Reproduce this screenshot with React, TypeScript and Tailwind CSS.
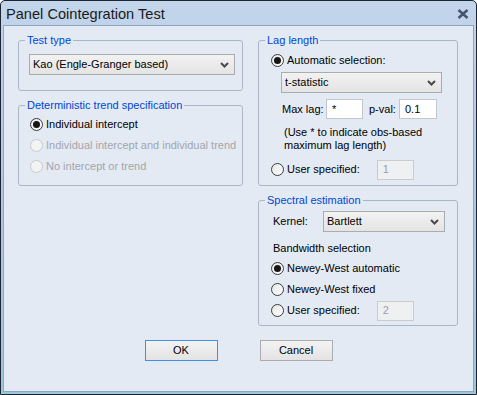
import React from "react";

function Radio({ checked = false, disabled = false }: { checked?: boolean; disabled?: boolean }) {
  return (
    <span
      className={`flex items-center justify-center w-[13px] h-[13px] rounded-full border shrink-0 ${
        disabled
          ? "border-[#c6cad0] bg-[#f3f3f3]"
          : "border-[#3c3c3c] bg-gradient-to-br from-[#e6e6e6] to-white"
      }`}
    >
      {checked && <span className="w-[7px] h-[7px] rounded-full bg-[#151515]" />}
    </span>
  );
}

function Select({ text, className = "" }: { text: string; className?: string }) {
  return (
    <div
      className={`flex items-center justify-between h-[21px] border border-[#acacac] bg-gradient-to-b from-[#f2f2f2] to-[#e4e4e4] pl-[3px] pr-[5px] text-black ${className}`}
    >
      <span>{text}</span>
      <svg width="9" height="6" viewBox="0 0 9 6">
        <path d="M1 1 L4.5 4.5 L8 1" stroke="#4a4a4a" strokeWidth="2" fill="none" />
      </svg>
    </div>
  );
}

function Input({ value, disabled = false, className = "" }: { value: string; disabled?: boolean; className?: string }) {
  return (
    <div
      className={`flex items-center h-[20px] border pl-[5px] ${
        disabled ? "border-[#c9cccf] bg-[#eff0f1] text-[#9a9fa5]" : "border-[#c3c7cc] bg-white text-black"
      } ${className}`}
    >
      {value}
    </div>
  );
}

function Group({ title, className = "", children }: { title: string; className?: string; children: React.ReactNode }) {
  return (
    <fieldset className="border border-[#aab6c6] rounded-[3px] p-0 m-0">
      <legend className="ml-[6px] px-[2px] text-[#0046d5] leading-[13px]">{title}</legend>
      <div className={className}>{children}</div>
    </fieldset>
  );
}

function RadioRow({
  label,
  checked = false,
  disabled = false,
  className = "",
}: {
  label: string;
  checked?: boolean;
  disabled?: boolean;
  className?: string;
}) {
  return (
    <div className={`flex items-center gap-[3px] h-[21px] ${disabled ? "text-[#a2a6ab]" : "text-black"} ${className}`}>
      <Radio checked={checked} disabled={disabled} />
      <span>{label}</span>
    </div>
  );
}

export default function App() {
  return (
    <div className="w-[477px] h-[395px] flex flex-col border border-[#1b2533] rounded-t-[5px] bg-gradient-to-b from-[#c3d5eb] via-[#b1c7e2] to-[#9ec7d8] text-[11px] leading-[13px] font-['Liberation_Sans',Arial,sans-serif] overflow-hidden">
      <div className="h-[24px] shrink-0 flex items-center justify-between pl-[5px] pr-[7px]">
        <span className="text-[14.6px] text-[#1a1a1a] leading-[18px] pt-[2px]">Panel Cointegration Test</span>
        <svg width="12" height="10" viewBox="0 0 12 10" className="mt-[2px]">
          <path d="M1.5 1 L10.5 9 M10.5 1 L1.5 9" stroke="#46556f" strokeWidth="2.6" />
        </svg>
      </div>
      <div className="flex-1 mx-[2px] mb-[2px] border border-[#8ea5c4] bg-[#e4eaf4] pl-[14px] pt-[8px] flex flex-col">
        <div className="flex gap-[15px]">
          {/* left column */}
          <div className="w-[225px] flex flex-col gap-[8px]">
            <Group title="Test type" className="pl-[10px] pt-[7px] pb-[15px]">
              <Select text="Kao (Engle-Granger based)" className="w-[206px]" />
            </Group>
            <Group title="Deterministic trend specification" className="pl-[11px] pt-[2px] pb-[8px]">
              <RadioRow label="Individual intercept" checked />
              <RadioRow label="Individual intercept and individual trend" disabled />
              <RadioRow label="No intercept or trend" disabled />
            </Group>
          </div>
          {/* right column */}
          <div className="w-[200px] flex flex-col gap-[8px]">
            <Group title="Lag length" className="pl-[12px] pt-[3px] pb-[5px]">
              <RadioRow label="Automatic selection:" checked />
              <Select text="t-statistic" className="ml-[10px] mt-[1px] w-[161px]" />
              <div className="flex items-center ml-[11px] mt-[6px]">
                <span className="w-[44px]">Max lag:</span>
                <Input value="*" className="w-[37px]" />
                <span className="ml-[6px] w-[30px]">p-val:</span>
                <Input value="0.1" className="w-[38px] pl-[3px]" />
              </div>
              <div className="ml-[13px] mt-[7px]">
                <div>(Use * to indicate obs-based</div>
                <div>maximum lag length)</div>
              </div>
              <div className="flex items-center mt-[7px]">
                <RadioRow label="User specified:" />
                <Input value="1" disabled className="ml-[17px] w-[37px]" />
              </div>
            </Group>
            <Group title="Spectral estimation" className="pl-[12px] pt-[4px] pb-[4px]">
              <div className="flex items-center">
                <span className="ml-[2px] w-[50px]">Kernel:</span>
                <Select text="Bartlett" className="w-[122px]" />
              </div>
              <div className="ml-[2px] mt-[10px] h-[13px]">Bandwidth selection</div>
              <RadioRow label="Newey-West automatic" checked className="mt-[3px]" />
              <RadioRow label="Newey-West fixed" />
              <div className="flex items-center">
                <RadioRow label="User specified:" />
                <Input value="2" disabled className="ml-[17px] w-[37px]" />
              </div>
            </Group>
          </div>
        </div>
        <div className="flex justify-center gap-[42px] mt-[14px] pr-[14px]">
          <button className="w-[73px] h-[21px] border border-[#3c92e6] bg-gradient-to-b from-[#f3f3f3] to-[#e3e3e3] text-black">
            OK
          </button>
          <button className="w-[73px] h-[21px] border border-[#acacac] bg-gradient-to-b from-[#f3f3f3] to-[#e3e3e3] text-black">
            Cancel
          </button>
        </div>
      </div>
    </div>
  );
}
